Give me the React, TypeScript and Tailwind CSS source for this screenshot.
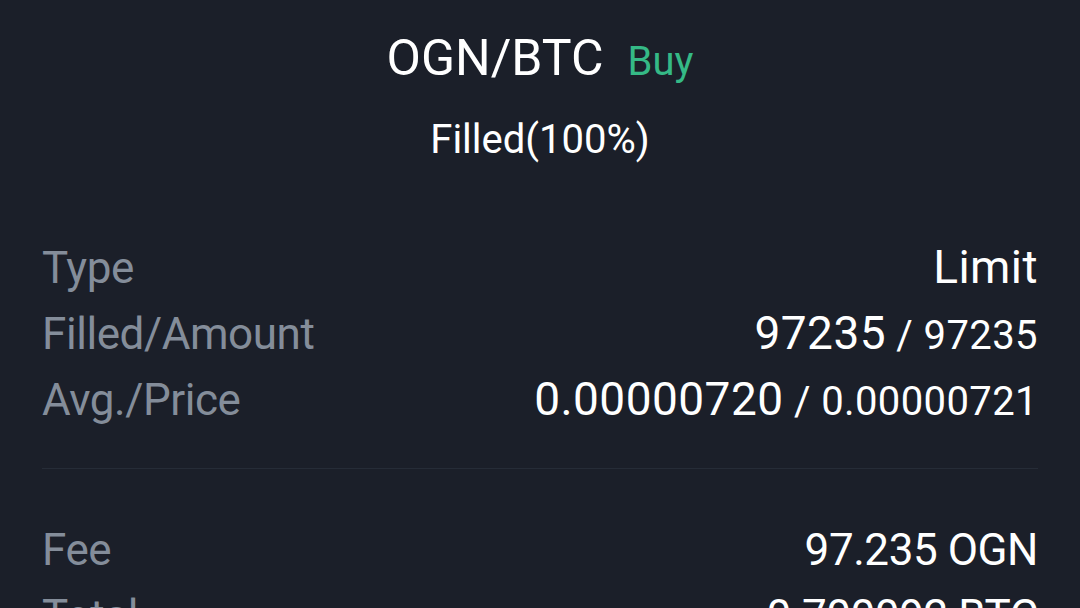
import React from 'react';

type Row = { label: string; main: string; sub?: string; small?: boolean };

const rows: Row[] = [
  { label: 'Type', main: 'Limit' },
  { label: 'Filled/Amount', main: '97235', sub: '97235' },
  { label: 'Avg./Price', main: '0.00000720', sub: '0.00000721' },
];

const extra: Row[] = [
  { label: 'Fee', main: '97.235 OGN', small: true },
  { label: 'Total', main: '0.700092 BTC', small: true },
];

function DetailRow({ row }: { row: Row }) {
  return (
    <div className="flex items-baseline justify-between h-[66px] leading-[66px]">
      <span className="text-[44px] tracking-[-0.01em] text-[#848d9a]">{row.label}</span>
      <span className="text-white whitespace-nowrap">
        <span className={row.small ? 'text-[44px] tracking-[-0.01em]' : 'text-[46px] tracking-[0.01em]'}>
          {row.main}
        </span>
        {row.sub && (
          <span className="text-[40px] tracking-[0.01em]">
            {' / '}
            {row.sub}
          </span>
        )}
      </span>
    </div>
  );
}

export default function App() {
  return (
    <div
      className="w-[1080px] h-[608px] overflow-hidden bg-[#1b1f29] px-[42px]"
      style={{ fontFamily: 'Roboto, "Noto Sans", sans-serif' }}
    >
      {/* header */}
      <div className="flex flex-col items-center pt-[28px]">
        <div className="flex items-baseline gap-[24px] h-[60px] leading-[60px]">
          <span className="text-[50px] text-white">OGN/BTC</span>
          <span className="text-[40px] text-[#35b986]">Buy</span>
        </div>
        <div className="mt-[28px] h-[48px] leading-[48px] text-[40px] text-white">Filled(100%)</div>
      </div>

      {/* order details */}
      <div className="mt-[70px]">
        {rows.map((r) => (
          <DetailRow key={r.label} row={r} />
        ))}
      </div>

      <div className="mt-[36px] h-px bg-[#262c37]" />

      <div className="mt-[48px]">
        {extra.map((r) => (
          <DetailRow key={r.label} row={r} />
        ))}
      </div>
    </div>
  );
}
